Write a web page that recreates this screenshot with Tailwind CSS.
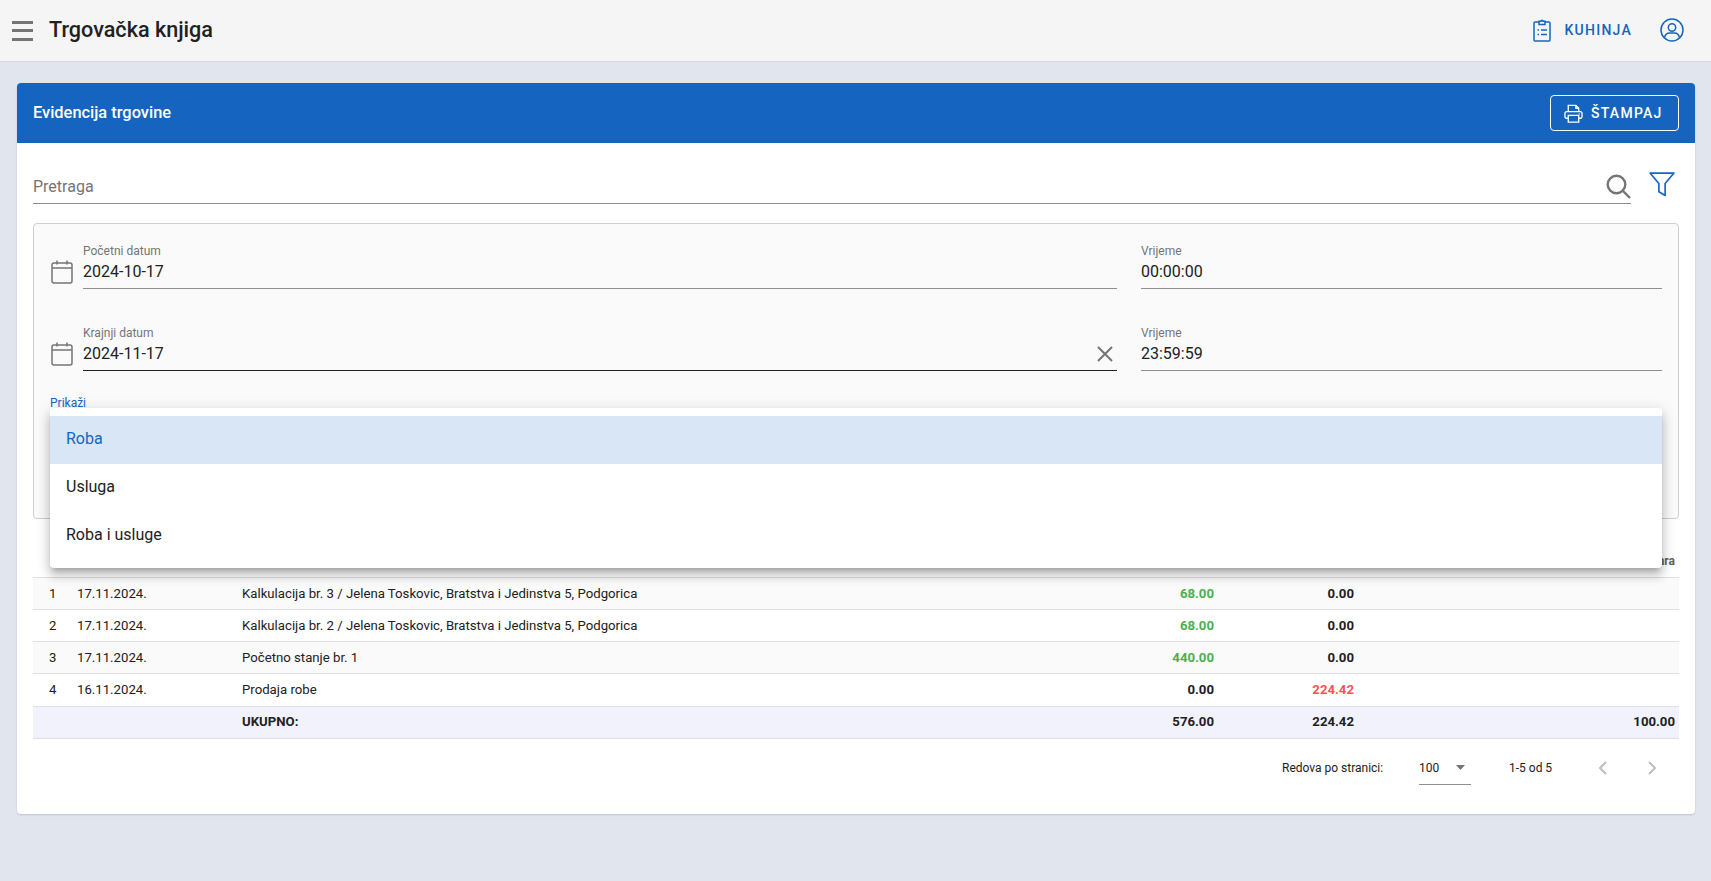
<!doctype html>
<html lang="en">
  <head>
    <meta charset="utf-8" />
    <title>Trgovačka knjiga</title>
    <script src="https://cdn.jsdelivr.net/npm/@tailwindcss/browser@4"></script>
  </head>
  <body class="h-screen overflow-hidden bg-[#e1e5ee] font-['Roboto',sans-serif] text-[#212121]">
    <header class="flex h-[62px] items-center border-b border-[#d5d8e0] bg-[#f5f5f5]">
      <button type="button" class="ml-3 flex h-[20px] w-[21px] flex-col justify-between">
        <span class="block h-[3px] w-full bg-[#757575]"></span>
        <span class="block h-[3px] w-full bg-[#757575]"></span>
        <span class="block h-[3px] w-full bg-[#757575]"></span>
      </button>
      <h1 class="ml-[16px] text-[21.6px] font-medium">Trgovačka knjiga</h1>
      <svg class="mr-[-1px] mb-[2px] ml-auto h-[24px] w-[18px]" viewBox="0 0 18 24" fill="none" stroke="#1565c0" stroke-width="1.5">
        <path d="M6 4H2a1 1 0 0 0-1 1v17a1 1 0 0 0 1 1h14a1 1 0 0 0 1-1V5a1 1 0 0 0-1-1h-4" />
        <path d="M6 6.5V3.2h2a1 1 0 0 1 2 0h2v3.3z" />
        <path d="M4.5 12h1.5M8 12h6M4.5 16.5h1.5M8 16.5h6" />
      </svg>
      <span class="ml-[15px] text-[14px] font-medium tracking-[1.25px] text-[#1565c0]">KUHINJA</span>
      <svg class="mr-[27px] mb-[2px] ml-[28px] size-[24px]" viewBox="0 0 24 24" fill="none" stroke="#1565c0" stroke-width="1.5">
        <circle cx="12" cy="12" r="11" />
        <circle cx="12" cy="9.5" r="3.7" />
        <path d="M4.5 19.5c.8-3 3-4.5 5-4.5h5c2 0 4.2 1.500 5 4.500" />
      </svg>
    </header>

    <main class="px-[17px] pt-[21px]">
      <section class="w-[1678px] rounded-[4px] bg-white shadow-[0_1px_2px_rgba(0,0,0,0.15)]">
        <div class="flex h-[60px] items-center justify-between rounded-t-[4px] bg-[#1565c0] pr-4 pl-4">
          <h2 class="text-[16.4px] font-medium text-white">Evidencija trgovine</h2>
          <button type="button" class="flex h-[36px] w-[129px] items-center rounded-[4px] border border-white pl-[13px] text-[14px] font-medium tracking-[1.25px] text-white">
            <svg class="mr-[8px] size-[19px]" viewBox="0 0 20 20" fill="none" stroke="#fff" stroke-width="1.4">
              <path d="M4.500 8V1.500h8l3 3V8" />
              <path d="M12.500 1.500v3h3" />
              <path d="M4.500 15H2.500a1.500 1.500 0 0 1-1.500-1.500V10a2 2 0 0 1 2-2h14a2 2 0 0 1 2 2v3.500A1.500 1.500 0 0 1 17.500 15h-2" />
              <path d="M4.500 12h11v7h-11z" />
              <path d="M15.500 10.500h1" />
            </svg>
            ŠTAMPAJ
          </button>
        </div>

        <div class="px-4">
          <div class="flex h-[61px] items-start">
            <div class="flex h-[61px] w-[1598px] items-end justify-between border-b border-[#8f8f8f] pb-[4px]">
              <span class="mb-[2px] text-[16px] leading-[20px] text-[#757575]">Pretraga</span>
              <svg class="size-[25px]" viewBox="0 0 25 25" fill="none" stroke="#757575" stroke-width="2.4">
                <circle cx="10.500" cy="10.500" r="8.800" />
                <path d="M17 17l7 7" />
              </svg>
            </div>
            <svg class="mt-[28px] ml-[18px] size-[26px]" viewBox="0 0 25 25" fill="none" stroke="#1565c0" stroke-width="1.600" stroke-linejoin="round">
              <path d="M1 2h23l-8.500 10v11.500l-6-3.500v-8z" />
            </svg>
          </div>

          <div class="mt-[19px] h-[296px] w-[1646px] rounded-[4px] border border-[#cfcfcf] bg-[#fafafa] pt-[20px] pl-[16px]">
            <div class="grid grid-cols-[1067px_521px] gap-x-[24px] gap-y-[37px]">
              <div class="flex">
                <svg class="mt-[16px] mr-[10px] ml-[1px] h-[24px] w-[22px]" viewBox="0 0 22 24" fill="none" stroke="#757575" stroke-width="1.500">
                  <rect x="1" y="3" width="20" height="20" rx="2" />
                  <path d="M1 8h20M6 0.500v4M16 0.500v4" />
                </svg>
                <div class="w-[1034px]">
                  <div class="text-[12px] leading-[14px] text-[#757575]">Početni datum</div>
                  <div class="h-[31px] border-b border-[#8f8f8f] pt-[3px] text-[16px] leading-[22px]">2024-10-17</div>
                </div>
              </div>
              <div>
                <div class="text-[12px] leading-[14px] text-[#757575]">Vrijeme</div>
                <div class="h-[31px] border-b border-[#8f8f8f] pt-[3px] text-[16px] leading-[22px]">00:00:00</div>
              </div>
              <div class="flex">
                <svg class="mt-[16px] mr-[10px] ml-[1px] h-[24px] w-[22px]" viewBox="0 0 22 24" fill="none" stroke="#757575" stroke-width="1.500">
                  <rect x="1" y="3" width="20" height="20" rx="2" />
                  <path d="M1 8h20M6 0.500v4M16 0.500v4" />
                </svg>
                <div class="w-[1034px]">
                  <div class="text-[12px] leading-[14px] text-[#757575]">Krajnji datum</div>
                  <div class="flex h-[31px] items-start justify-between border-b border-[#212121] pt-[3px] text-[16px] leading-[22px]">
                    2024-11-17
                    <svg class="mt-[3px] mr-[4px] size-[16px]" viewBox="0 0 16 16" fill="none" stroke="#757575" stroke-width="2">
                      <path d="M1 1l14 14M15 1L1 15" />
                    </svg>
                  </div>
                </div>
              </div>
              <div>
                <div class="text-[12px] leading-[14px] text-[#757575]">Vrijeme</div>
                <div class="h-[31px] border-b border-[#8f8f8f] pt-[3px] text-[16px] leading-[22px]">23:59:59</div>
              </div>
            </div>

            <div class="relative mt-[25px]">
              <div class="text-[12px] leading-[14px] text-[#1565c0]">Prikaži</div>
              <ul class="absolute top-[11.5px] left-0 z-10 w-[1612px] rounded-[4px] bg-white py-2 text-[16px] shadow-[0_5px_5px_-3px_rgba(0,0,0,0.2),0_8px_10px_1px_rgba(0,0,0,0.14),0_3px_14px_2px_rgba(0,0,0,0.12)]">
                <li class="flex h-[48px] items-center bg-[#d9e6f6] px-4 pb-[2px] text-[#1565c0]">Roba</li>
                <li class="flex h-[48px] items-center px-4 pb-[2px]">Usluga</li>
                <li class="flex h-[48px] items-center px-4 pb-[2px]">Roba i usluge</li>
              </ul>
            </div>
          </div>

          <table class="w-[1646px] table-fixed border-collapse text-[13.2px]">
            <colgroup>
              <col class="w-[41px]" />
              <col class="w-[164px]" />
              <col class="w-[764px]" />
              <col class="w-[216px]" />
              <col class="w-[140px]" />
              <col />
            </colgroup>
            <thead>
              <tr class="h-[58px] border-b border-[#e0e0e0] text-[12px] font-medium text-[#616161]">
                <th class="pl-4 text-left align-bottom"></th>
                <th class="pb-[7px] pl-1 text-left align-bottom">Datum p.</th>
                <th></th>
                <th></th>
                <th></th>
                <th class="pr-1 pb-[7px] text-right align-bottom">Para</th>
              </tr>
            </thead>
            <tbody>
              <tr class="h-[32px] border-b border-[#e0e0e0] bg-[#fafafa] [&>td]:pt-[2px]">
                <td class="pl-4">1</td>
                <td class="pl-[3px]">17.11.2024.</td>
                <td class="pl-1">Kalkulacija br. 3 / Jelena Toskovic, Bratstva i Jedinstva 5, Podgorica</td>
                <td class="pr-1 text-right font-bold text-[#4caf50]">68.00</td>
                <td class="pr-1 text-right font-bold">0.00</td>
                <td></td>
              </tr>
              <tr class="h-[32px] border-b border-[#e0e0e0] bg-white [&>td]:pt-[2px]">
                <td class="pl-4">2</td>
                <td class="pl-[3px]">17.11.2024.</td>
                <td class="pl-1">Kalkulacija br. 2 / Jelena Toskovic, Bratstva i Jedinstva 5, Podgorica</td>
                <td class="pr-1 text-right font-bold text-[#4caf50]">68.00</td>
                <td class="pr-1 text-right font-bold">0.00</td>
                <td></td>
              </tr>
              <tr class="h-[32px] border-b border-[#e0e0e0] bg-[#fafafa] [&>td]:pt-[2px]">
                <td class="pl-4">3</td>
                <td class="pl-[3px]">17.11.2024.</td>
                <td class="pl-1">Početno stanje br. 1</td>
                <td class="pr-1 text-right font-bold text-[#4caf50]">440.00</td>
                <td class="pr-1 text-right font-bold">0.00</td>
                <td></td>
              </tr>
              <tr class="h-[33px] border-b border-[#e0e0e0] bg-white">
                <td class="pl-4">4</td>
                <td class="pl-[3px]">16.11.2024.</td>
                <td class="pl-1">Prodaja robe</td>
                <td class="pr-1 text-right font-bold">0.00</td>
                <td class="pr-1 text-right font-bold text-[#ff5252]">224.42</td>
                <td></td>
              </tr>
              <tr class="h-[32px] border-b border-[#e0e0e0] bg-[#f1f2fb] font-bold">
                <td></td>
                <td></td>
                <td class="pl-1">UKUPNO:</td>
                <td class="pr-1 text-right">576.00</td>
                <td class="pr-1 text-right">224.42</td>
                <td class="pr-1 text-right">100.00</td>
              </tr>
            </tbody>
          </table>

          <div class="flex h-[75px] items-start pt-[15px] text-[12px] leading-[28px]">
            <span class="ml-[1249px] w-[103px] whitespace-nowrap">Redova po stranici:</span>
            <div class="ml-[34px] flex h-[31px] w-[52px] justify-between border-b border-[#8f8f8f]">
              100
              <svg class="mt-[11px] mr-[6px] h-[5px] w-[9px]" viewBox="0 0 9 5" fill="#757575"><path d="M0 0h9L4.500 5z" /></svg>
            </div>
            <span class="ml-[38px] w-[44px] whitespace-nowrap">1-5 od 5</span>
            <svg class="mt-[7px] ml-[45px] h-[14px] w-[9px]" viewBox="0 0 9 14" fill="none" stroke="#bdbdbd" stroke-width="2"><path d="M8 1L2 7l6 6" /></svg>
            <svg class="mt-[7px] ml-[41px] h-[14px] w-[9px]" viewBox="0 0 9 14" fill="none" stroke="#bdbdbd" stroke-width="2"><path d="M1 1l6 6-6 6" /></svg>
          </div>
        </div>
      </section>
    </main>
  </body>
</html>
